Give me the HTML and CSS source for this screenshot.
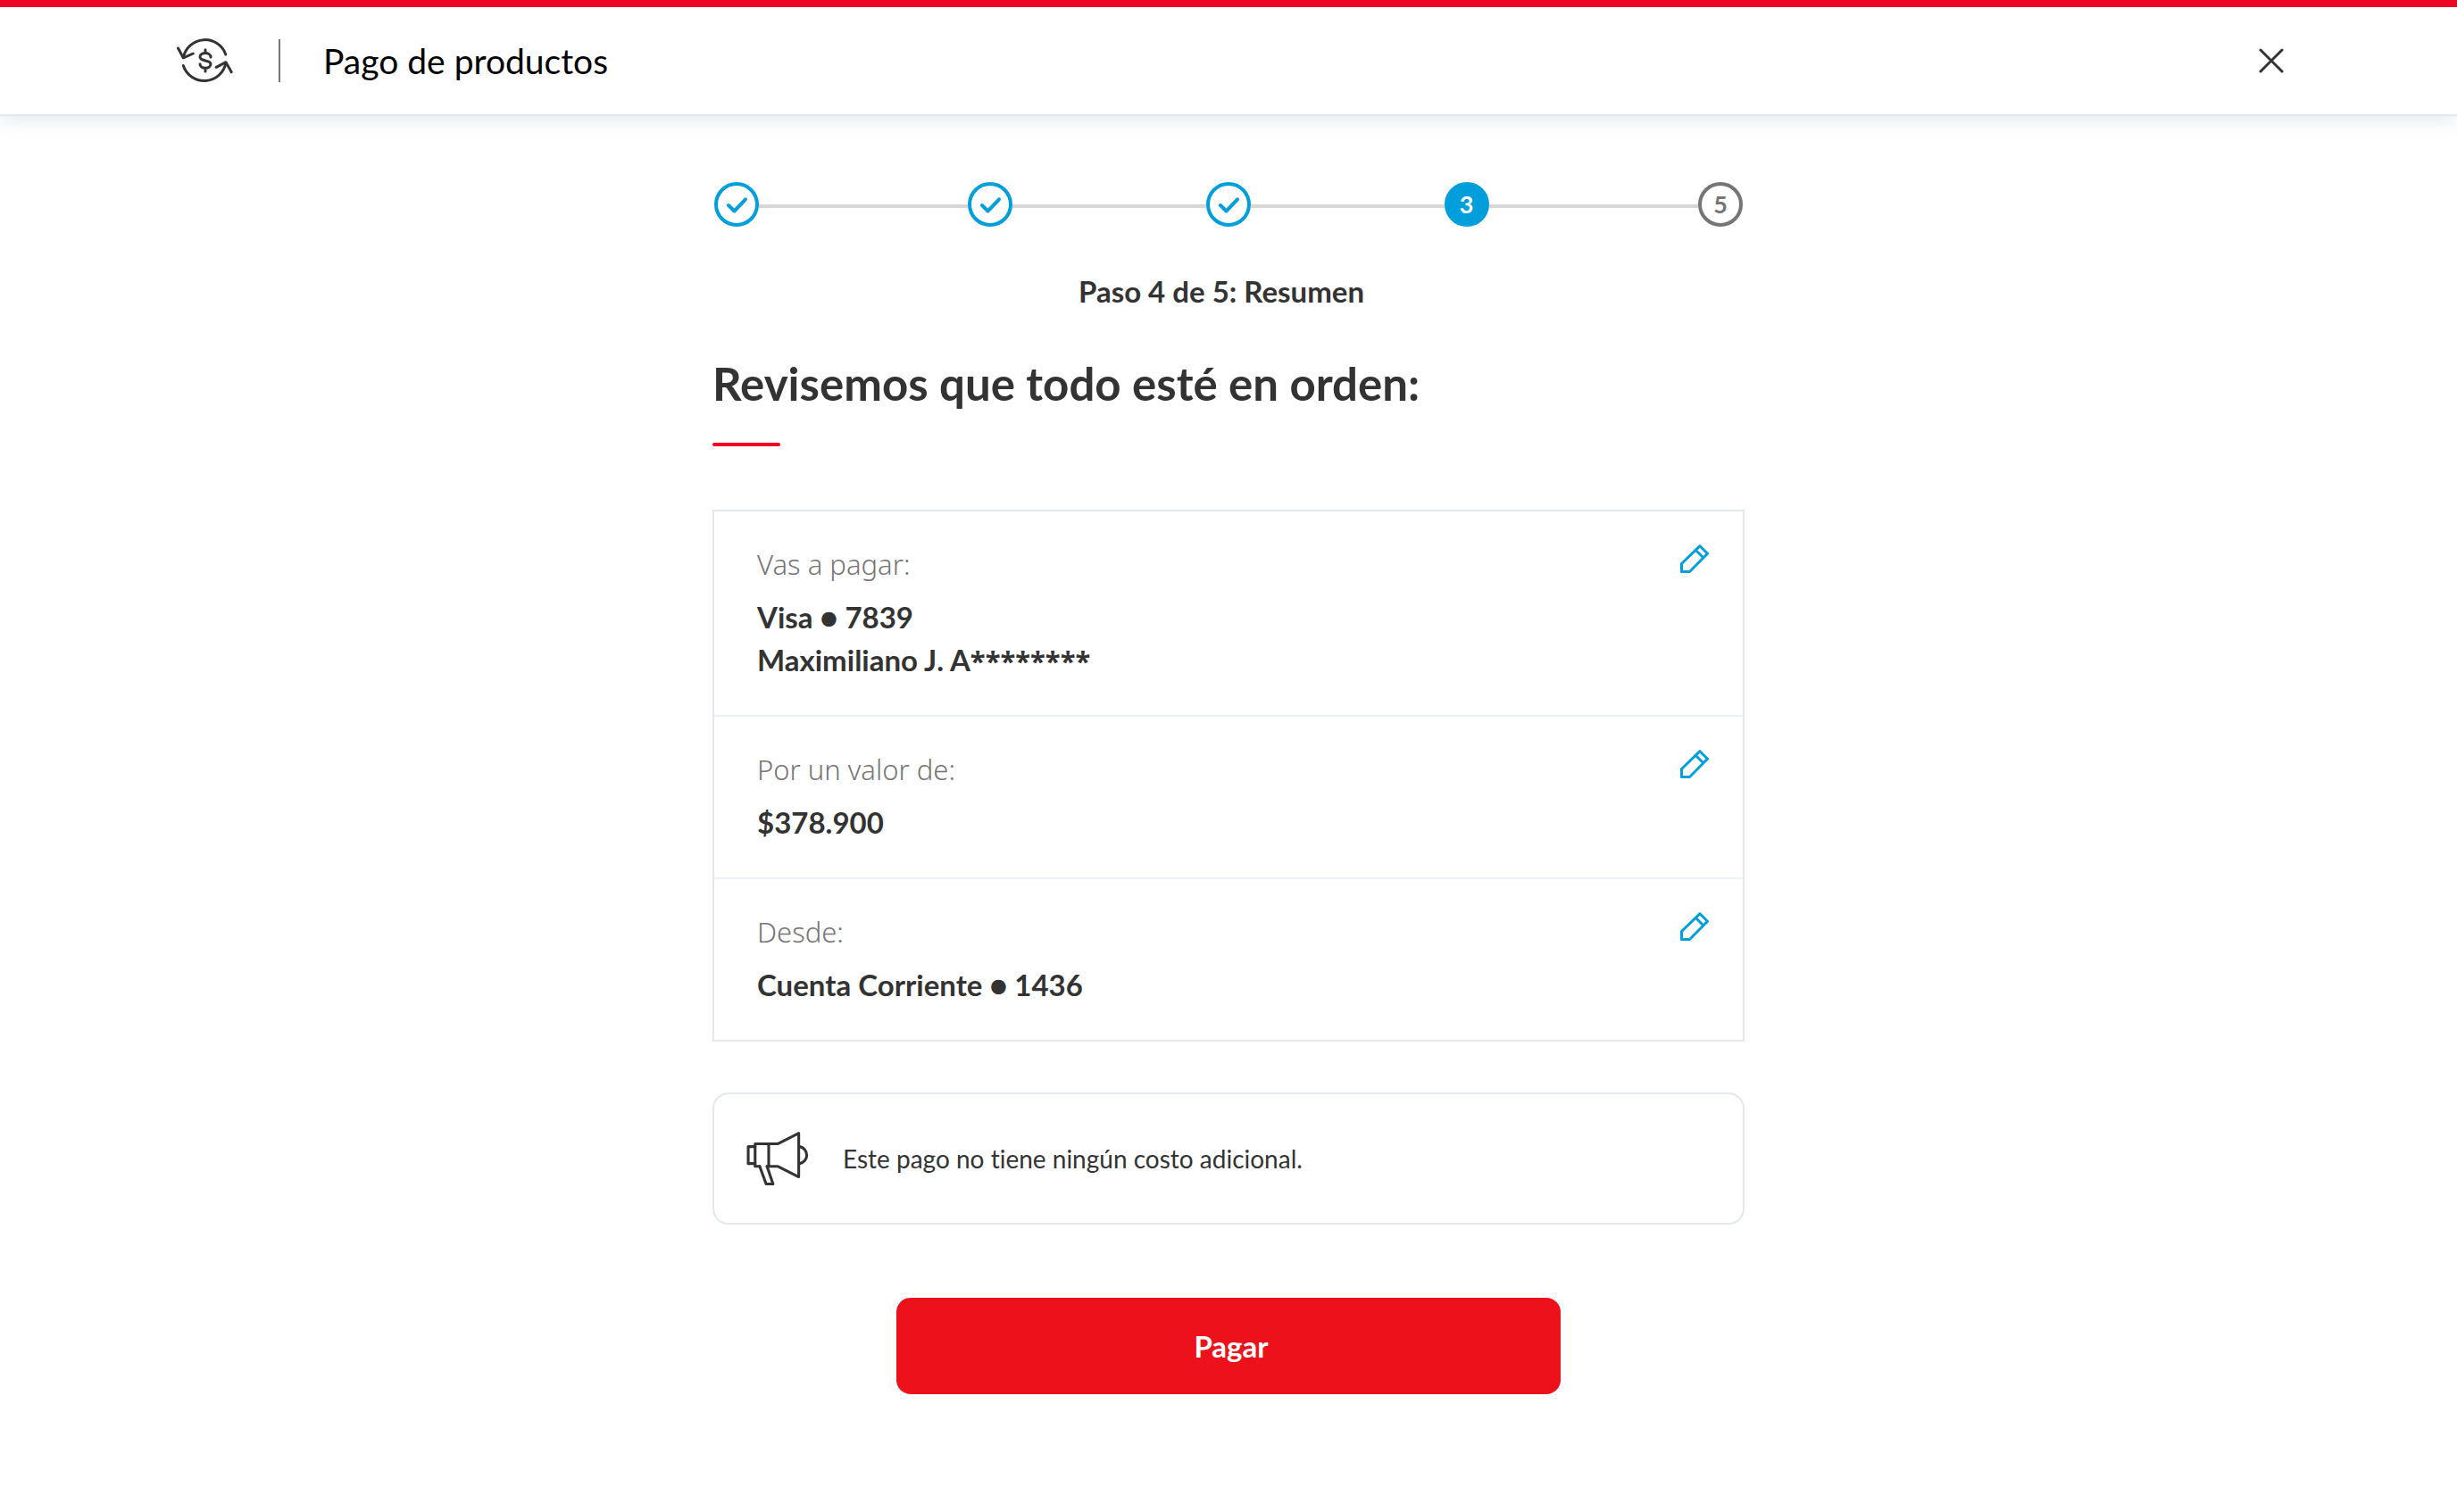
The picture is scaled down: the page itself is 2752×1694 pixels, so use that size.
FILE: index.html
```html
<!DOCTYPE html>
<html lang="es">
<head>
    <meta charset="UTF-8">
    <meta name="viewport" content="width=device-width, initial-scale=1.0">
    <title>Pago de productos</title>
    <link rel="stylesheet" href="styles.css">
</head>
<body>
    <header class="header">
        <svg class="logo" viewBox="8 12 63 56" aria-hidden="true">
            <path d="M62.8 33A24.7 24.7 0 0 0 15.3 36.5"/>
            <path d="M9.5 26l5.8 10.8L26.3 32"/>
            <path d="M15.3 45.5A24.7 24.7 0 0 0 63 42.5"/>
            <path d="M52.2 47.3L63 41.7l6.2 11"/>
            <path d="M46 36c0-3-3-4.5-6-4.5s-6 1.5-6 4.3c0 5.5 12 2.8 12 8 0 3-3 4.5-6 4.5s-6-1.5-6-4.5M40 27.7v3.5M40 48.5v3.5"/>
        </svg>
        <h1 class="title">Pago de productos</h1>
        <button class="closeBtn" type="button" aria-label="Cerrar">
            <svg viewBox="0 0 28 28"><path d="M2 2l24 24M26 2L2 26"/></svg>
        </button>
    </header>

    <main class="main">
        <ol class="steps">
            <li class="step done"><svg viewBox="0 0 42 42"><path d="M12 22l6.5 6.5L31 15.3"/></svg></li>
            <li class="line"></li>
            <li class="step done"><svg viewBox="0 0 42 42"><path d="M12 22l6.5 6.5L31 15.3"/></svg></li>
            <li class="line short"></li>
            <li class="step done"><svg viewBox="0 0 42 42"><path d="M12 22l6.5 6.5L31 15.3"/></svg></li>
            <li class="line short"></li>
            <li class="step current">3</li>
            <li class="line"></li>
            <li class="step">5</li>
        </ol>
        <p class="stepName">Paso 4 de 5: Resumen</p>

        <h2 class="heading">Revisemos que todo esté en orden:</h2>

        <section class="card">
            <div class="row">
                <div>
                    <p class="label">Vas a pagar:</p>
                    <p class="value">Visa ● 7839</p>
                    <p class="value">Maximiliano J. A<span class="mask">********</span></p>
                </div>
                <button class="editBtn" type="button" aria-label="Editar producto">
                    <svg viewBox="42 50 32 32"><path d="M43.5 80.5v-9L64 51.7l8.5 8.5-20 20.3zM59.5 56.5l8 8"/></svg>
                </button>
            </div>
            <div class="row">
                <div>
                    <p class="label">Por un valor de:</p>
                    <p class="value">$378.900</p>
                </div>
                <button class="editBtn" type="button" aria-label="Editar valor">
                    <svg viewBox="42 50 32 32"><path d="M43.5 80.5v-9L64 51.7l8.5 8.5-20 20.3zM59.5 56.5l8 8"/></svg>
                </button>
            </div>
            <div class="row">
                <div>
                    <p class="label">Desde:</p>
                    <p class="value">Cuenta Corriente ● 1436</p>
                </div>
                <button class="editBtn" type="button" aria-label="Editar cuenta">
                    <svg viewBox="42 50 32 32"><path d="M43.5 80.5v-9L64 51.7l8.5 8.5-20 20.3zM59.5 56.5l8 8"/></svg>
                </button>
            </div>
        </section>

        <div class="note">
            <svg class="megaphone" viewBox="12 13 70 58" aria-hidden="true">
                <path d="M21.5 29h-7.5v18.5h7.5"/>
                <path d="M26.5 50.5h-5v-24.5h24.5L69 14.5v47.5L46 50.5H34.5"/>
                <path d="M36.3 26v24.5"/>
                <path d="M26.5 50.5l7 19.3h7.5l-6.5-19.3"/>
                <path d="M70 29a9.4 9.4 0 0 1 0 18.5"/>
            </svg>
            <p>Este pago no tiene ningún costo adicional.</p>
        </div>

        <button class="payBtn" type="button">Pagar</button>
    </main>
</body>
</html>
```
FILE: styles.css
```css
*{margin: 0; padding: 0; box-sizing: border-box;}
:root{--red: #ed111b; --blue: #009fdb; --dark: #333; --grey: #757575; --border: #e2e8ee;}
body{font-family: Lato, "Noto Sans", sans-serif; font-size: 33px; line-height: 48px; font-variant-ligatures: none; color: var(--dark); background-color: #fff;}
button{font-family: inherit; border: none; background: none; cursor: pointer;}
svg{display: block; fill: none; stroke: currentColor; stroke-linecap: round; stroke-linejoin: round;}

/* header */
.header{height: 130px; padding: 0 194px 0 198px; display: flex; align-items: center; border-top: 8px solid #ec0824; border-bottom: 2px solid var(--border); box-shadow: 0 4px 20px rgba(75, 95, 130, .15);}
.logo{width: 63px; height: 56px; stroke-width: 3;}
.title{margin-left: 51px; padding-left: 48px; border-left: 2px solid var(--grey); font-size: 39px; font-weight: 400; color: #000;}
.closeBtn{margin-left: auto;}
.closeBtn svg{width: 28px; height: 28px; stroke: var(--dark); stroke-width: 3;}

.main{max-width: 1156px; margin: 0 auto; padding: 74px 0 100px;}

/* steps */
.steps{display: flex; align-items: center; padding: 0 2px; list-style: none;}
.step{width: 50px; height: 50px; border: 4px solid var(--grey); border-radius: 50%; color: var(--grey); font-size: 27px; font-weight: 700; line-height: 42px; text-align: center;}
.step svg{stroke-width: 4;}
.done{border-color: var(--blue); color: var(--blue);}
.current{border-color: var(--blue); background-color: var(--blue); color: #fff;}
.line{flex: 235; height: 4px; margin-top: 4px; background-color: #d6d6d6;}
.short{flex: 217;}
.stepName{margin-top: 48px; padding-right: 16px; font-weight: 700; text-align: center;}

.heading{margin-top: 50px; font-size: 51px; line-height: 60px;}
.heading::after{content: ""; display: block; width: 76px; height: 4px; margin-top: 36px; border-radius: 2px; background-color: #f50025;}

/* summary */
.card{margin-top: 71px; border: 2px solid var(--border);}
.row{display: flex; justify-content: space-between; align-items: flex-start; padding: 35px 38px 38px 48px;}
.row + .row{border-top: 2px solid #edf2f7;}
.label{margin-bottom: 11px; font-family: "Noto Sans", sans-serif; font-size: 31px; font-weight: 300; color: var(--grey);}
.value{font-weight: 700;}
.mask{font-family: "Noto Sans", sans-serif; font-size: 31px; line-height: 1;}
.editBtn{padding-top: 2px; color: var(--blue);}
.editBtn svg{width: 32px; height: 32px; stroke-width: 3;}

.note{display: flex; align-items: center; gap: 36px; height: 148px; margin-top: 57px; padding: 0 36px; border: 2px solid var(--border); border-radius: 18px; font-size: 28px;}
.megaphone{width: 72px; height: 60px; stroke-width: 3;}

.payBtn{display: block; width: 744px; max-width: 100%; height: 108px; margin: 82px auto 0; padding-left: 6px; border-radius: 16px; background-color: var(--red); color: #fff; font-size: 33px; font-weight: 700;}
```
